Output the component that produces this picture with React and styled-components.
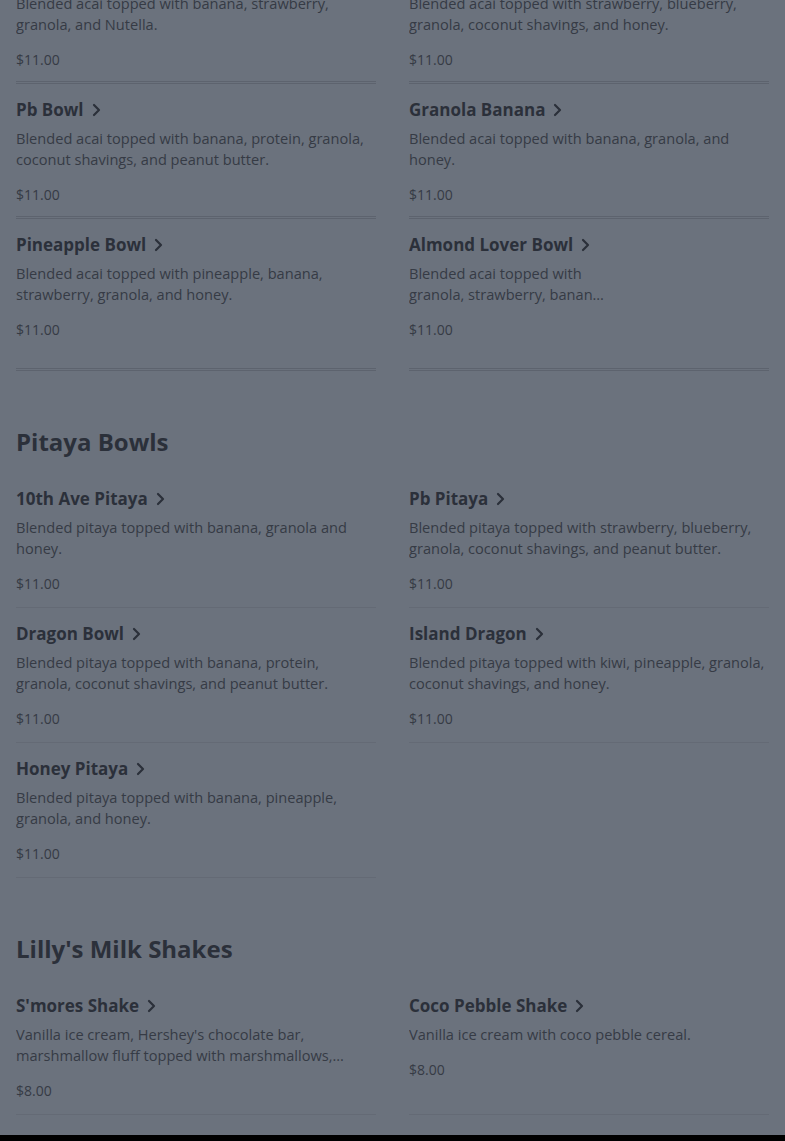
import styled, { createGlobalStyle } from "styled-components";

const GlobalStyle = createGlobalStyle`
  * {
    margin: 0;
    padding: 0;
    box-sizing: border-box;
  }
  body {
    background-color: #6b727d;
    font-family: "Open Sans", "Liberation Sans", sans-serif;
    color: #2b303a;
    overflow: hidden;
  }
`;

const Page = styled.main`
  padding: 0 16px;
  /* page is scrolled part way into the first section */
  margin-top: -51px;
  height: 1192px;
  display: flex;
  flex-direction: column;
`;

const Section = styled.section`
  display: flex;
  flex-direction: column;
  & + & {
    margin-top: 55px;
  }
`;

const SectionTitle = styled.h2`
  font-size: 24px;
  font-weight: 700;
  line-height: 32px;
  color: #2b303a;
  margin-bottom: 15px;
`;

const Grid = styled.div`
  display: grid;
  grid-template-columns: 360px 360px;
  column-gap: 33px;
`;

const Item = styled.div`
  display: flex;
  gap: 16px;
  padding: 14px 0 ${(p) => (p.$double ? "11px" : "13px")};
  border-bottom: ${(p) => (p.$double ? "3px double #5d636e" : "1px solid #646a75")};
`;

const ItemBody = styled.div`
  flex: 1;
  min-width: 0;
  display: flex;
  flex-direction: column;
`;

const ItemName = styled.h3`
  display: flex;
  align-items: center;
  gap: 8px;
  font-size: 17px;
  font-weight: 700;
  line-height: 24px;
  color: #2b303a;
`;

const Desc = styled.p`
  margin-top: 6px;
  font-size: 14.6px;
  line-height: 21px;
  height: ${(p) => (p.$lines === 1 ? "21px" : "42px")};
  color: #363b45;
  display: -webkit-box;
  -webkit-line-clamp: 2;
  -webkit-box-orient: vertical;
  overflow: hidden;
`;

const Price = styled.span`
  margin-top: 14px;
  font-size: 14px;
  line-height: 21px;
  color: #363b45;
`;

const ImageSlot = styled.div`
  width: 148px;
  height: 122px;
  flex-shrink: 0;
  margin-top: 2px;
`;

const BottomBar = styled.div`
  margin-top: 20px;
  height: 60px;
  margin-left: -16px;
  margin-right: -16px;
  background-color: #000;
`;

const Chevron = () => (
  <svg width="9" height="14" viewBox="0 0 9 14" fill="none">
    <path
      d="M2 2l5 5-5 5"
      stroke="#2b303a"
      strokeWidth="2.2"
      strokeLinecap="round"
      strokeLinejoin="round"
    />
  </svg>
);

const acai = [
  {
    name: "Nutella Bowl",
    desc: "Blended acai topped with banana, strawberry, granola, and Nutella.",
    price: "$11.00",
  },
  {
    name: "Berry Bowl",
    desc: "Blended acai topped with strawberry, blueberry, granola, coconut shavings, and honey.",
    price: "$11.00",
  },
  {
    name: "Pb Bowl",
    desc: "Blended acai topped with banana, protein, granola, coconut shavings, and peanut butter.",
    price: "$11.00",
  },
  {
    name: "Granola Banana",
    desc: "Blended acai topped with banana, granola, and honey.",
    price: "$11.00",
  },
  {
    name: "Pineapple Bowl",
    desc: "Blended acai topped with pineapple, banana, strawberry, granola, and honey.",
    price: "$11.00",
  },
  {
    name: "Almond Lover Bowl",
    desc: "Blended acai topped with granola, strawberry, banana, almond butter, and honey.",
    price: "$11.00",
    image: true,
  },
];

const pitaya = [
  {
    name: "10th Ave Pitaya",
    desc: "Blended pitaya topped with banana, granola and honey.",
    price: "$11.00",
  },
  {
    name: "Pb Pitaya",
    desc: "Blended pitaya topped with strawberry, blueberry, granola, coconut shavings, and peanut butter.",
    price: "$11.00",
  },
  {
    name: "Dragon Bowl",
    desc: "Blended pitaya topped with banana, protein, granola, coconut shavings, and peanut butter.",
    price: "$11.00",
  },
  {
    name: "Island Dragon",
    desc: "Blended pitaya topped with kiwi, pineapple, granola, coconut shavings, and honey.",
    price: "$11.00",
  },
  {
    name: "Honey Pitaya",
    desc: "Blended pitaya topped with banana, pineapple, granola, and honey.",
    price: "$11.00",
  },
];

const shakes = [
  {
    name: "S'mores Shake",
    desc: "Vanilla ice cream, Hershey's chocolate bar, marshmallow fluff topped with marshmallows, graham crackers, and chocolate.",
    price: "$8.00",
  },
  {
    name: "Coco Pebble Shake",
    desc: "Vanilla ice cream with coco pebble cereal.",
    price: "$8.00",
    lines: 1,
  },
];

function MenuItem({ item, double }) {
  return (
    <Item $double={double}>
      <ItemBody>
        <ItemName>
          {item.name}
          <Chevron />
        </ItemName>
        <Desc $lines={item.lines || 2}>{item.desc}</Desc>
        <Price>{item.price}</Price>
      </ItemBody>
      {item.image && <ImageSlot />}
    </Item>
  );
}

export default function App() {
  return (
    <>
      <GlobalStyle />
      <Page>
        <Section>
          <Grid>
            {acai.map((item) => (
              <MenuItem key={item.name} item={item} double />
            ))}
          </Grid>
        </Section>
        <Section>
          <SectionTitle>Pitaya Bowls</SectionTitle>
          <Grid>
            {pitaya.map((item) => (
              <MenuItem key={item.name} item={item} />
            ))}
          </Grid>
        </Section>
        <Section>
          <SectionTitle>Lilly's Milk Shakes</SectionTitle>
          <Grid>
            {shakes.map((item) => (
              <MenuItem key={item.name} item={item} />
            ))}
          </Grid>
        </Section>
        <BottomBar />
      </Page>
    </>
  );
}
